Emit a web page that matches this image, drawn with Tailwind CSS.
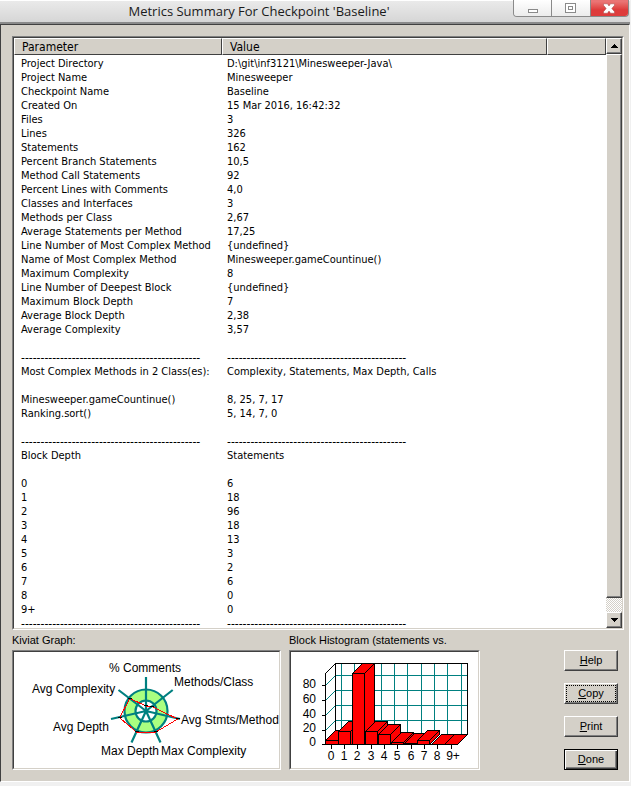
<!DOCTYPE html>
<html lang="en">
<head>
<meta charset="utf-8">
<title>Metrics Summary</title>
<script src="https://cdn.jsdelivr.net/npm/@tailwindcss/browser@4"></script>
</head>
<body class="bg-[#f0f0f0] text-black">
<div class="flex h-screen min-h-[640px] flex-col pb-1 pr-px font-['Liberation_Sans',sans-serif]">
  <header class="relative flex h-6 shrink-0 items-start justify-center border-t border-b-2 border-t-white border-b-[#8a8a8a] bg-linear-to-b from-[#eaeaea] to-[#d6d6d6] pr-28">
    <h1 class="font-['Open_Sans','Noto_Sans',sans-serif] text-[13px] leading-5 text-[#1a1a1a]">Metrics Summary For Checkpoint 'Baseline'</h1>
    <div class="absolute -top-px right-px flex h-[17px] w-[116px] overflow-hidden rounded-b-sm border border-t-0 border-[#8a8a8a]">
      <button aria-label="Minimize" class="flex flex-1 items-center justify-center border-r border-[#8a8a8a] bg-linear-to-b from-white to-[#ececec]">
        <svg width="12" height="12" viewBox="0 0 12 12" shape-rendering="crispEdges"><rect x="1.5" y="7.5" width="9" height="3" fill="#fff" stroke="#8a8a8a"/></svg>
      </button>
      <button aria-label="Maximize" class="flex flex-1 items-center justify-center border-r border-[#8a8a8a] bg-linear-to-b from-white to-[#ececec]">
        <svg width="12" height="12" viewBox="0 0 12 12" shape-rendering="crispEdges"><rect x=".5" y="1.5" width="10" height="9" fill="#fff" stroke="#8a8a8a"/><rect x="3.500" y="4.500" width="4" height="3" fill="#fff" stroke="#8a8a8a"/></svg>
      </button>
      <button aria-label="Close" class="flex flex-1 items-center justify-center bg-linear-to-b from-[#ea7474] from-10% to-[#de3c3c] to-60%">
        <svg width="12" height="11" viewBox="0 0 12 11"><path d="M.5 .8h4L6 3l1.500-2.200h4v1.500L8.800 5.500l2.700 3.200v1.500h-4L6 8l-1.500 2.200h-4V8.700L3.200 5.500.5 2.300z" fill="#fff" stroke="#a04848" stroke-width=".5"/></svg>
      </button>
    </div>
  </header>

  <main class="flex min-h-0 flex-1 flex-col border border-t-[#404040] border-r-white border-b-white border-l-[#404040] bg-[#d4d0c8] px-[11px] pt-[11px] pb-[11px] pr-[5px]">
    <section class="min-h-0 flex-1 border border-t-[#808080] border-l-[#808080] border-b-white border-r-white">
      <div class="flex h-full border border-t-[#404040] border-l-[#404040] border-b-[#d4d0c8] border-r-[#d4d0c8] bg-white">
        <div class="min-w-0 flex-1 overflow-hidden">
          <table class="w-full table-fixed border-separate border-spacing-0 text-left font-['DejaVu_Sans_Condensed','DejaVu_Sans',sans-serif] text-[11px] leading-[14px]">
            <colgroup><col class="w-[208px]"><col class="w-[325px]"><col></colgroup>
            <thead class="bg-[#d4d0c8] text-xs leading-[14px]">
              <tr class="*:h-[17px] *:border *:border-t-white *:border-l-white *:border-r-[#404040] *:border-b-[#404040] *:px-[7px] *:py-0 *:font-normal">
                <th>Parameter</th><th>Value</th><th></th>
              </tr>
            </thead>
            <tbody class="whitespace-pre [&_td]:h-[14px] [&_td]:py-0 [&_td]:pl-[7px] [&_td:nth-child(2)]:pl-[5px] [&>tr:first-child>td]:pt-0.5">
              <tr><td>Project Directory</td><td>D:\git\inf3121\Minesweeper-Java\</td></tr>
              <tr><td>Project Name</td><td>Minesweeper</td></tr>
              <tr><td>Checkpoint Name</td><td>Baseline</td></tr>
              <tr><td>Created On</td><td>15 Mar 2016, 16:42:32</td></tr>
              <tr><td>Files</td><td>3</td></tr>
              <tr><td>Lines</td><td>326</td></tr>
              <tr><td>Statements</td><td>162</td></tr>
              <tr><td>Percent Branch Statements</td><td>10,5</td></tr>
              <tr><td>Method Call Statements</td><td>92</td></tr>
              <tr><td>Percent Lines with Comments</td><td>4,0</td></tr>
              <tr><td>Classes and Interfaces</td><td>3</td></tr>
              <tr><td>Methods per Class</td><td>2,67</td></tr>
              <tr><td>Average Statements per Method</td><td>17,25</td></tr>
              <tr><td>Line Number of Most Complex Method</td><td>{undefined}</td></tr>
              <tr><td>Name of Most Complex Method</td><td>Minesweeper.gameCountinue()</td></tr>
              <tr><td>Maximum Complexity</td><td>8</td></tr>
              <tr><td>Line Number of Deepest Block</td><td>{undefined}</td></tr>
              <tr><td>Maximum Block Depth</td><td>7</td></tr>
              <tr><td>Average Block Depth</td><td>2,38</td></tr>
              <tr><td>Average Complexity</td><td>3,57</td></tr>
              <tr><td></td><td></td></tr>
              <tr class="text-xs leading-[14px]"><td>----------------------------------------------</td><td>----------------------------------------------</td></tr>
              <tr><td>Most Complex Methods in 2 Class(es):</td><td>Complexity, Statements, Max Depth, Calls</td></tr>
              <tr><td></td><td></td></tr>
              <tr><td>Minesweeper.gameCountinue()</td><td>8, 25, 7, 17</td></tr>
              <tr><td>Ranking.sort()</td><td>5, 14, 7, 0</td></tr>
              <tr><td></td><td></td></tr>
              <tr class="text-xs leading-[14px]"><td>----------------------------------------------</td><td>----------------------------------------------</td></tr>
              <tr><td>Block Depth</td><td>Statements</td></tr>
              <tr><td></td><td></td></tr>
              <tr><td>0</td><td>6</td></tr>
              <tr><td>1</td><td>18</td></tr>
              <tr><td>2</td><td>96</td></tr>
              <tr><td>3</td><td>18</td></tr>
              <tr><td>4</td><td>13</td></tr>
              <tr><td>5</td><td>3</td></tr>
              <tr><td>6</td><td>2</td></tr>
              <tr><td>7</td><td>6</td></tr>
              <tr><td>8</td><td>0</td></tr>
              <tr><td>9+</td><td>0</td></tr>
              <tr class="text-xs leading-[14px]"><td>----------------------------------------------</td><td>----------------------------------------------</td></tr>
            </tbody>
          </table>
        </div>
        <div class="flex w-4 shrink-0 flex-col bg-[repeating-conic-gradient(#ffffff_0_25%,#d4d0c8_0_50%)] bg-[length:2px_2px]">
          <button aria-label="Scroll up" class="flex h-4 shrink-0 items-center justify-center border border-t-white border-l-white border-r-[#404040] border-b-[#404040] bg-[#d4d0c8] shadow-[inset_-1px_-1px_#808080]">
            <svg width="7" height="4" viewBox="0 0 7 4" shape-rendering="crispEdges"><path d="M3 0h1v1h1v1h1v1h1v1H0V3h1V2h1V1h1z"/></svg>
          </button>
          <div class="flex-1 border border-t-white border-l-white border-r-[#404040] border-b-[#404040] bg-[#d4d0c8] shadow-[inset_-1px_-1px_#808080]"></div>
          <button aria-label="Scroll down" class="mt-[14px] flex h-4 shrink-0 items-center justify-center border border-t-white border-l-white border-r-[#404040] border-b-[#404040] bg-[#d4d0c8] shadow-[inset_-1px_-1px_#808080]">
            <svg width="7" height="4" viewBox="0 0 7 4" shape-rendering="crispEdges"><path d="M0 0h7v1H6v1H5v1H4v1H3V3H2V2H1V1H0z"/></svg>
          </button>
        </div>
      </div>
    </section>

    <section class="flex shrink-0 items-end pt-[3px] text-[11px]">
      <figure class="w-[269px]">
        <figcaption class="h-[17px] leading-[14px]">Kiviat Graph:</figcaption>
        <div class="border border-t-[#808080] border-l-[#808080] border-b-white border-r-white">
          <div class="border border-t-[#404040] border-l-[#404040] border-b-[#d4d0c8] border-r-[#d4d0c8] bg-white">
            <svg class="block h-[116px] w-full font-['Liberation_Sans',sans-serif] text-xs" aria-label="Kiviat graph">
              <circle cx="132" cy="59" r="16" fill="none" stroke="#aaff80" stroke-width="11"/>
              <g fill="none" stroke="#008080" stroke-width="2.200">
                <circle cx="132" cy="59" r="21.500"/><circle cx="132" cy="59" r="10.500"/>
                <path d="M132 59V25M132 59L158.700 38M132 59L166 67M132 59L146.500 90.500M132 59L117.500 90.500M132 59L97 67M132 59L104.500 38"/>
              </g>
              <path d="M132 54L138 54.700L163.700 67L142 80H122.500L105.500 65.700L116 46.500z" fill="none" stroke="#f00" shape-rendering="crispEdges"/>
              <path d="M130 53.500h4M136 54.500h4M162 66.500h4M140 79.500h4M121 79.500h4M104 65.500h4M114 46.500h4" stroke="#000"/>
              <text x="95" y="20">% Comments</text>
              <text x="160" y="34">Methods/Class</text>
              <text x="167" y="72">Avg Stmts/Method</text>
              <text x="147" y="103">Max Complexity</text>
              <text x="87" y="103">Max Depth</text>
              <text x="39" y="79">Avg Depth</text>
              <text x="18" y="41">Avg Complexity</text>
            </svg>
          </div>
        </div>
      </figure>
      <figure class="ml-2 w-[191px]">
        <figcaption class="h-[17px] leading-[14px]">Block Histogram (statements vs.</figcaption>
        <div class="border border-t-[#808080] border-l-[#808080] border-b-white border-r-white">
          <div class="border border-t-[#404040] border-l-[#404040] border-b-[#d4d0c8] border-r-[#d4d0c8] bg-white">
            <svg class="block h-[116px] w-full font-['Liberation_Sans',sans-serif] text-xs" aria-label="Block histogram">
              <g transform="translate(-1 0)">
              <path d="M45.500 23.500H177.500M45.500 38.500H177.500M45.500 53.500H177.500M45.500 68.500H177.500M51.500 11.500V82.500M64.500 11.500V82.500M78.500 11.500V82.500M91.500 11.500V82.500M104.500 11.500V82.500M117.500 11.500V82.500M131.500 11.500V82.500M144.500 11.500V82.500M157.500 11.500V82.500M171.500 11.500V82.500M35.500 33.500l10-10M35.500 48.500l10-10M35.500 63.500l10-10M35.500 78.500l10-10" fill="none" stroke="#008080" shape-rendering="crispEdges"/>
              <path d="M45.500 82.500V11.500H177.500V82.500L167.500 92.500H31.500M35.500 92.500V21.500l10-10M31.500 33.500h4M31.500 48.500h4M31.500 63.500h4M31.500 78.500h4M41.500 92.500v4M54.500 92.500v4M67.500 92.500v4M81.500 92.500v4M94.500 92.500v4M107.500 92.500v4M121.500 92.500v4M134.500 92.500v4M147.500 92.500v4M161.500 92.500v4" fill="none" stroke="#000" shape-rendering="crispEdges"/>
              <g fill="#f00" stroke="#000" shape-rendering="crispEdges">
                <path d="M35.500 88.500l10-10h13v4l-10 10h-13zM35.500 88.500h13v4M48.500 88.500l10-10"/>
                <path d="M48.500 79.500l10-10h13v13l-10 10h-13zM48.500 79.500h12v13M60.500 79.500l10-10"/>
                <path d="M62.500 21.500l10-10h12v71l-10 10h-12zM62.500 21.500h12v71M74.500 21.500l10-10"/>
                <path d="M75.500 79.500l10-10h12v13l-10 10h-12zM75.500 79.500h12v13M87.500 79.500l10-10"/>
                <path d="M88.500 82.500l10-10h12v10l-10 10h-12zM88.500 82.500h12v10M100.500 82.500l10-10"/>
                <path d="M101.500 90.500l10-10h12v2l-10 10h-12zM101.500 90.500h12v2M113.500 90.500l10-10"/>
                <path d="M114.500 91.500l10-10h12v1l-10 10h-12zM114.500 91.500h12v1M126.500 91.500l10-10"/>
                <path d="M127.500 88.500l10-10h12v4l-10 10h-12zM127.500 88.500h12v4M139.500 88.500l10-10"/>
                <path d="M141.500 92.500l10-10h13l-10 10z"/>
                <path d="M154.500 92.500l10-10h13l-10 10z"/>
              </g>
              <path d="M141 92l10-10" stroke="#fff" stroke-dasharray="1.400 1.400"/>
              <g text-anchor="end"><text x="26" y="36">80</text><text x="26" y="51">60</text><text x="26" y="66">40</text><text x="26" y="80">20</text><text x="26" y="94">0</text></g>
              <g text-anchor="middle"><text x="41" y="108">0</text><text x="54" y="108">1</text><text x="67" y="108">2</text><text x="81" y="108">3</text><text x="94" y="108">4</text><text x="107" y="108">5</text><text x="121" y="108">6</text><text x="134" y="108">7</text><text x="147" y="108">8</text><text x="163" y="108">9+</text></g>
              </g>
            </svg>
          </div>
        </div>
      </figure>
      <div class="ml-auto mr-[6px] flex w-[54px] flex-col gap-3 text-[11px] leading-[14px] *:h-[21px] *:border">
        <button class="border-t-white border-l-white border-r-[#404040] border-b-[#404040] pb-0.5 shadow-[inset_-1px_-1px_#808080]"><u>H</u>elp</button>
        <button class="border-t-white border-l-white border-r-[#404040] border-b-[#404040] p-px shadow-[inset_-1px_-1px_#808080]"><span class="flex h-full items-center justify-center border border-dotted border-black pb-0.5"><span><u>C</u>opy</span></span></button>
        <button class="border-t-white border-l-white border-r-[#404040] border-b-[#404040] pb-0.5 shadow-[inset_-1px_-1px_#808080]"><u>P</u>rint</button>
        <button class="border-black pb-0.5 shadow-[inset_1px_1px_#ffffff,inset_-1px_-1px_#404040,inset_-2px_-2px_#808080]"><u>D</u>one</button>
      </div>
    </section>
  </main>
</div>
</body>
</html>
